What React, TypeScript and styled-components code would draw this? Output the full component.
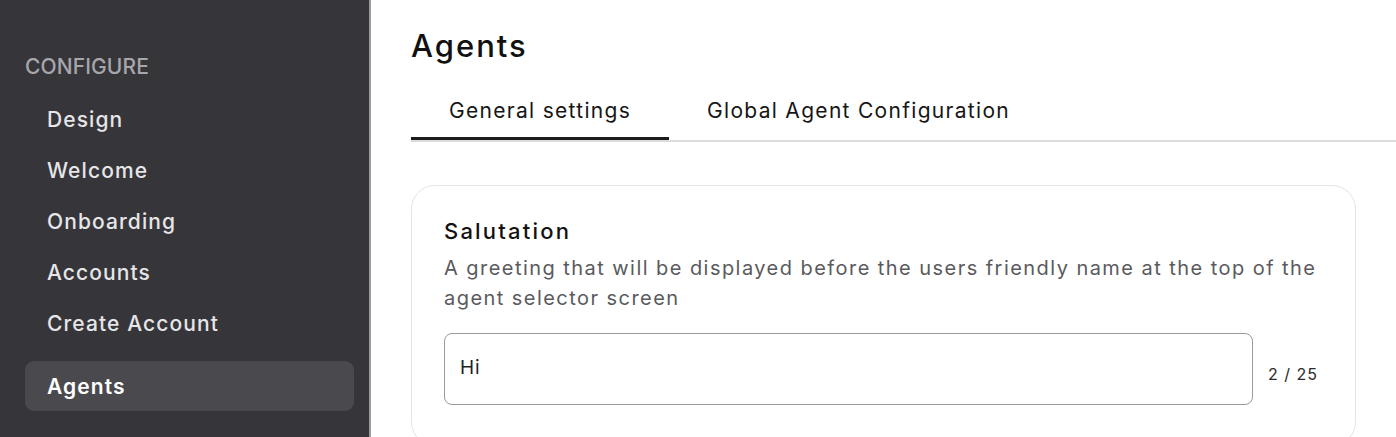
import React from "react";
import styled, { createGlobalStyle } from "styled-components";

const GlobalStyle = createGlobalStyle`
  html, body { margin: 0; padding: 0; background: #ffffff; }
  body { font-family: "Inter", "Noto Sans", sans-serif; color: #111; }
  * { box-sizing: border-box; }
`;

const Layout = styled.div`
  display: flex;
  width: 1396px;
  height: 437px;
  overflow: hidden;
`;

const Sidebar = styled.aside`
  flex: 0 0 371px;
  background: #36353a;
  border-right: 2px solid #9c9ca1;
  padding: 50px 0 0 25px;
  display: flex;
  flex-direction: column;
`;

const SectionLabel = styled.div`
  font-size: 21px;
  font-weight: 500;
  letter-spacing: 0.1px;
  line-height: 34px;
  color: #a7a6ab;
  margin-bottom: 10px;
`;

const NavList = styled.nav`
  display: flex;
  flex-direction: column;
  width: 329px;
`;

const NavItem = styled.div<{ $active?: boolean }>`
  height: ${(p) => (p.$active ? "50px" : "51px")};
  margin-top: ${(p) => (p.$active ? "12px" : "0")};
  display: flex;
  align-items: center;
  padding-left: 22px;
  border-radius: 9px;
  font-size: 21px;
  letter-spacing: 1.1px;
  font-weight: ${(p) => (p.$active ? 600 : 500)};
  color: ${(p) => (p.$active ? "#ffffff" : "#e6e6e8")};
  background: ${(p) => (p.$active ? "#4a494e" : "transparent")};
`;

const Main = styled.main`
  flex: 1;
  padding: 24px 0 0 40px;
  display: flex;
  flex-direction: column;
`;

const Title = styled.h1`
  margin: 0 0 16px 0;
  font-size: 31px;
  font-weight: 500;
  letter-spacing: 2px;
  line-height: 44px;
  color: #111;
`;

const TabBar = styled.div`
  display: flex;
  border-bottom: 2px solid #dcdcdc;
`;

const Tab = styled.div<{ $active?: boolean }>`
  height: 56px;
  line-height: 54px;
  padding: 0 38px;
  font-size: 21px;
  letter-spacing: 1.3px;
  font-weight: 400;
  color: #161616;
  border-bottom: 3px solid ${(p) => (p.$active ? "#1c1c1e" : "transparent")};
`;

const Card = styled.section`
  margin: 43px 40px 0 0;
  border: 1px solid #e4e4e6;
  border-radius: 24px;
  padding: 30px 32px 40px 32px;
`;

const FieldTitle = styled.h2`
  margin: 0 0 7px 0;
  font-size: 22px;
  font-weight: 500;
  letter-spacing: 2.2px;
  line-height: 30px;
  color: #121212;
`;

const FieldHelp = styled.p`
  margin: 0 0 20px 0;
  font-size: 20px;
  font-weight: 400;
  letter-spacing: 1.45px;
  line-height: 30px;
  color: #5a5a5e;
`;

const FieldRow = styled.div`
  display: flex;
  align-items: center;
  padding-right: 5px;
`;

const TextInput = styled.input`
  flex: 1;
  height: 72px;
  border: 1px solid #9a9a9e;
  border-radius: 8px;
  padding: 0 16px 4px 15px;
  font-family: "Inter", "Noto Sans", sans-serif;
  font-size: 19px;
  letter-spacing: 0.8px;
  color: #1e1e1e;
  outline: none;
  background: #fff;
`;

const Counter = styled.span`
  margin: 10px 0 0 15px;
  font-size: 16px;
  letter-spacing: 1px;
  color: #2a2a2a;
  white-space: nowrap;
`;

const navItems = ["Design", "Welcome", "Onboarding", "Accounts", "Create Account"];

export default function App() {
  const value = "Hi";
  return (
    <>
      <GlobalStyle />
      <Layout>
        <Sidebar>
          <SectionLabel>CONFIGURE</SectionLabel>
          <NavList>
            {navItems.map((n) => (
              <NavItem key={n}>{n}</NavItem>
            ))}
            <NavItem $active>Agents</NavItem>
          </NavList>
        </Sidebar>
        <Main>
          <Title>Agents</Title>
          <TabBar>
            <Tab $active>General settings</Tab>
            <Tab>Global Agent Configuration</Tab>
          </TabBar>
          <Card>
            <FieldTitle>Salutation</FieldTitle>
            <FieldHelp>
              A greeting that will be displayed before the users friendly name at the top of the agent selector screen
            </FieldHelp>
            <FieldRow>
              <TextInput defaultValue={value} />
              <Counter>{value.length} / 25</Counter>
            </FieldRow>
          </Card>
        </Main>
      </Layout>
    </>
  );
}
